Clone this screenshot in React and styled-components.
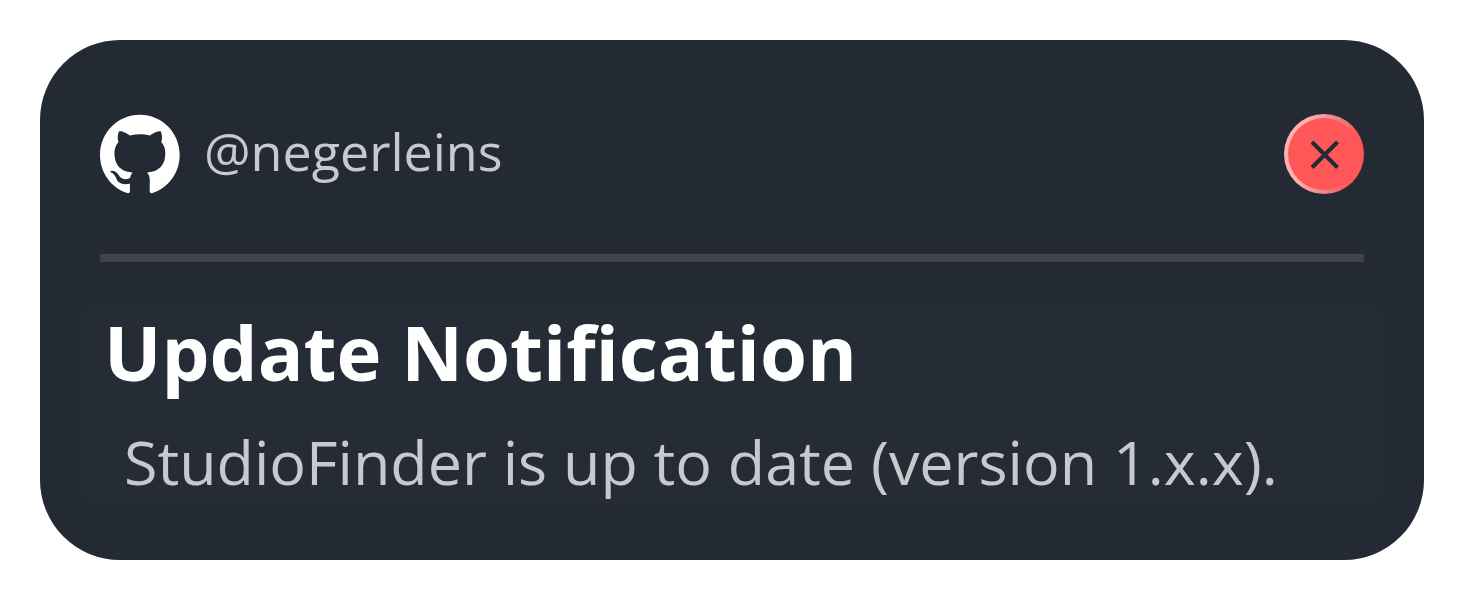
import React from 'react';
import styled, { createGlobalStyle } from 'styled-components';

const GlobalStyle = createGlobalStyle`
  *, *::before, *::after { box-sizing: border-box; }
  body {
    margin: 0;
    background: #ffffff;
    font-family: 'Open Sans', 'Noto Sans', sans-serif;
  }
`;

const Page = styled.main`
  padding: 40px;
`;

const Card = styled.article`
  padding: 74px 40px 54px;
  border-radius: 80px;
  background: #242a34;
  color: #c8c9cc;
`;

const Header = styled.header`
  display: flex;
  align-items: center;
  justify-content: space-between;
  margin: 0 20px;
  padding-bottom: 60px;
  border-bottom: 8px solid #40444d;
`;

const Profile = styled.a`
  display: flex;
  align-items: center;
  gap: 24px;
  color: inherit;
  text-decoration: none;
`;

const Handle = styled.span`
  padding-bottom: 6px;
  font-size: 52px;
  line-height: 72px;
`;

const GitHubMark = styled.svg`
  width: 80px;
  height: 80px;
  fill: #ffffff;
`;

const CloseButton = styled.button`
  display: grid;
  place-items: center;
  width: 80px;
  height: 80px;
  padding: 0;
  border: 4px solid transparent;
  border-radius: 50%;
  background:
    linear-gradient(#ff5757, #ff5757) padding-box,
    linear-gradient(100deg, #ffb0b0 25%, #e47c7c 65%, #ff5757 80%) border-box;
  cursor: pointer;
`;

const CrossIcon = styled.svg`
  width: 30px;
  height: 30px;
  stroke: #242a34;
  stroke-width: 4;
`;

const Message = styled.section`
  margin-top: 40px;
  padding: 0 24px 4px;
  border-radius: 20px;
  background: #262c36;
`;

const Title = styled.h1`
  margin: 0;
  color: #ffffff;
  font-size: 76px;
  font-weight: 700;
  line-height: 100px;
`;

const Description = styled.p`
  margin: 20px 0 0;
  padding-left: 20px;
  font-size: 61px;
  line-height: 80px;
`;

export default function App() {
  return (
    <>
      <GlobalStyle />
      <Page>
        <Card>
          <Header>
            <Profile href="https://github.com/negerleins">
              <GitHubMark viewBox="0 0 98 96" aria-hidden="true">
                <path
                  fillRule="evenodd"
                  clipRule="evenodd"
                  d="M48.854 0C21.839 0 0 22 0 49.217c0 21.756 13.993 40.172 33.405 46.69 2.427.49 3.316-1.059 3.316-2.362 0-1.141-.08-5.052-.08-9.127-13.59 2.934-16.42-5.867-16.42-5.867-2.184-5.704-5.42-7.17-5.42-7.17-4.448-3.015.324-3.015.324-3.015 4.934.326 7.523 5.052 7.523 5.052 4.367 7.496 11.404 5.378 14.235 4.074.404-3.178 1.699-5.378 3.074-6.6-10.839-1.141-22.243-5.378-22.243-24.283 0-5.378 1.94-9.778 5.014-13.2-.485-1.222-2.184-6.275.486-13.038 0 0 4.125-1.304 13.426 5.052a46.97 46.97 0 0 1 12.214-1.63c4.125 0 8.33.571 12.213 1.63 9.302-6.356 13.427-5.052 13.427-5.052 2.67 6.763.97 11.816.485 13.038 3.155 3.422 5.015 7.822 5.015 13.2 0 18.905-11.404 23.06-22.324 24.283 1.78 1.548 3.316 4.481 3.316 9.126 0 6.6-.08 11.897-.08 13.526 0 1.304.89 2.853 3.316 2.364 19.412-6.52 33.405-24.935 33.405-46.691C97.707 22 75.788 0 48.854 0z"
                />
              </GitHubMark>
              <Handle>@negerleins</Handle>
            </Profile>
            <CloseButton type="button" aria-label="Close">
              <CrossIcon viewBox="0 0 30 30" aria-hidden="true">
                <path d="M3 3 28.500 28.500M28.500 3 3 28.500" />
              </CrossIcon>
            </CloseButton>
          </Header>
          <Message>
            <Title>Update Notification</Title>
            <Description>StudioFinder is up to date (version 1.x.x).</Description>
          </Message>
        </Card>
      </Page>
    </>
  );
}
